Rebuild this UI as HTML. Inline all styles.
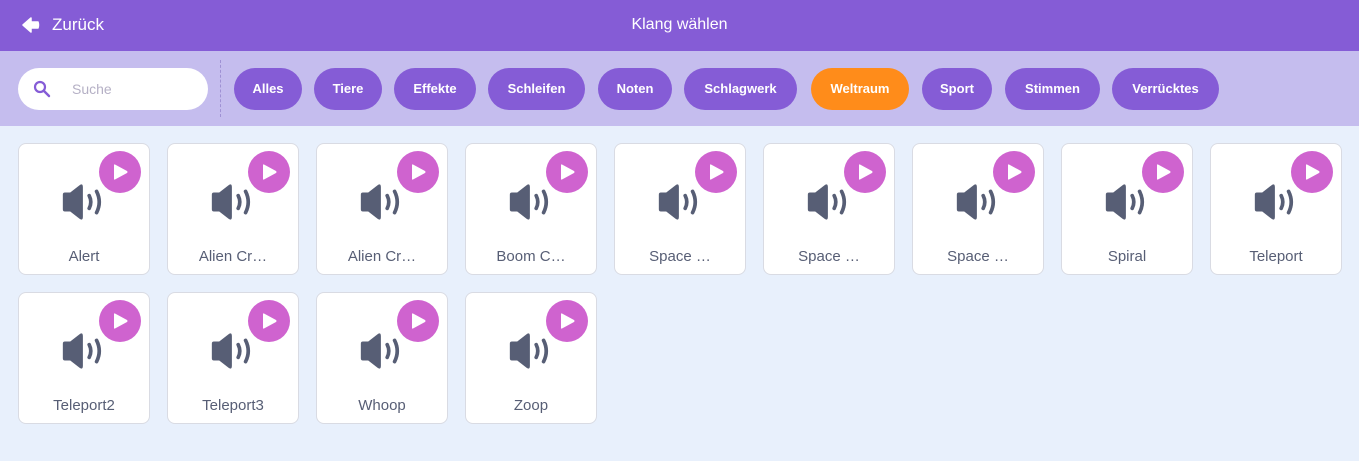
<!DOCTYPE html>
<html><head><meta charset="utf-8"><style>
*{box-sizing:border-box;margin:0;padding:0}
body{width:1359px;height:461px;overflow:hidden;background:#e8f0fc;font-family:"Liberation Sans",sans-serif;position:relative}
.hdr{position:absolute;left:0;top:0;width:1359px;height:51px;background:#855cd6;color:#fff}
.back{position:absolute;left:22px;top:15px;font-size:17px;display:flex;align-items:center;gap:12px}
.title{position:absolute;left:0;right:0;top:16px;text-align:center;font-size:16px}
.bar{position:absolute;left:0;top:51px;width:1359px;height:75px;background:#c5bdee}
.search{position:absolute;left:18px;top:17px;width:190px;height:42px;border-radius:21px;background:#fff}
.search span{position:absolute;left:54px;top:13px;font-size:14px;color:#b5b0c5}
.div{position:absolute;left:220px;top:9px;height:57px;border-left:1px dashed #9f91d4}
.chip{position:absolute;top:17px;height:42px;border-radius:21px;background:#855cd6;color:#fff;font-weight:bold;font-size:13px;text-align:center;line-height:42px}
.card{position:absolute;width:132px;height:132px;background:#fff;border:1px solid #d9dbe3;border-radius:8px}
.play{position:absolute;left:80px;top:7px;width:42px;height:42px;border-radius:50%;background:#cf63cf}
.spk{position:absolute;left:41px;top:39px}
.lbl{position:absolute;left:0;right:0;top:104px;text-align:center;font-size:15px;color:#575e75}
</style></head><body>
<div class="hdr">
<div class="back"><svg width="18" height="18" viewBox="0 0 18 18"><path d="M1 9 L9 2 L9 6 L16 6 Q17 9 16 12 L9 12 L9 16 Z" fill="#fff" stroke="#fff" stroke-linejoin="round" stroke-width="1.5"/></svg>Zurück</div>
<div class="title">Klang wählen</div>
</div>
<div class="bar">
<div class="search"><svg style="position:absolute;left:15px;top:12px" width="18" height="18" viewBox="0 0 18 18"><circle cx="7" cy="7" r="5" fill="none" stroke="#855cd6" stroke-width="2.2"/><path d="M11 11 L16 16" stroke="#855cd6" stroke-width="2.4" stroke-linecap="round"/></svg><span>Suche</span></div>
<div class="div"></div>
<div class="chip" style="left:234px;width:68px">Alles</div>
<div class="chip" style="left:314px;width:68px">Tiere</div>
<div class="chip" style="left:394px;width:82px">Effekte</div>
<div class="chip" style="left:488px;width:97px">Schleifen</div>
<div class="chip" style="left:598px;width:74px">Noten</div>
<div class="chip" style="left:684px;width:113px">Schlagwerk</div>
<div class="chip" style="left:811px;width:98px;background:#ff8c1a">Weltraum</div>
<div class="chip" style="left:922px;width:70px">Sport</div>
<div class="chip" style="left:1005px;width:95px">Stimmen</div>
<div class="chip" style="left:1112px;width:107px">Verrücktes</div>
</div>
<div id="g"></div>
<script>
var n=["Alert","Alien Cr…","Alien Cr…","Boom C…","Space …","Space …","Space …","Spiral","Teleport","Teleport2","Teleport3","Whoop","Zoop"];
var h="";
n.forEach(function(t,i){var c=i%9,r=Math.floor(i/9);
h+='<div class="card" style="left:'+(18+c*149)+'px;top:'+(143+r*149)+'px"><div class="play"><svg width="42" height="42" viewBox="0 0 42 42"><path d="M16 13.5 L28 20 Q29 21 28 22 L16 28.5 Q15 29 15 28 L15 14 Q15 13 16 13.5Z" fill="#fff"/></svg></div><svg class="spk" width="50" height="38" viewBox="0 0 46 36"><path d="M2 11 Q2 9 4 9 L9 9 L18 2 Q21 0 21 4 L21 32 Q21 36 18 34 L9 27 L4 27 Q2 27 2 25Z" fill="#575e75"/><path d="M27 12 Q30 18 27 24" fill="none" stroke="#575e75" stroke-width="3.5" stroke-linecap="round"/><path d="M34 8 Q39 18 34 28" fill="none" stroke="#575e75" stroke-width="3.5" stroke-linecap="round"/></svg><div class="lbl">'+t+'</div></div>';});
document.getElementById("g").innerHTML=h;
</script>
</body></html>
